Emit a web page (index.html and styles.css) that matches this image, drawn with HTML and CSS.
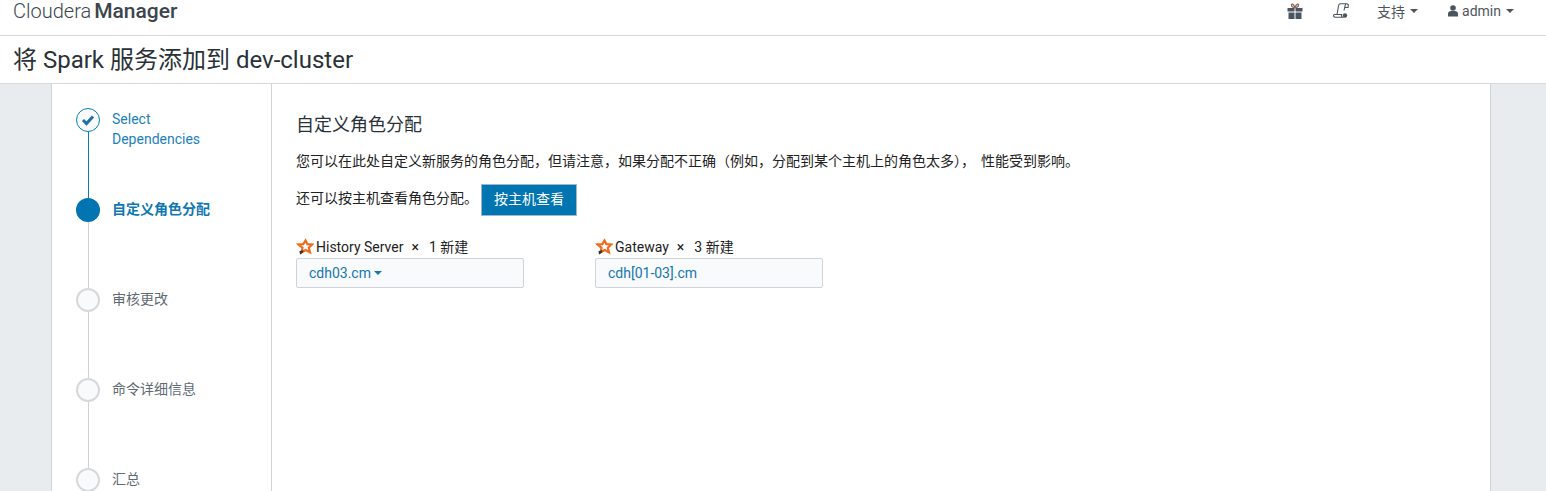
FILE: index.html
```html
<!DOCTYPE html>
<html lang="zh">
<head>
<meta charset="utf-8">
<title>将 Spark 服务添加到 dev-cluster</title>
<link rel="stylesheet" href="styles.css">
</head>
<body>
<header class="topbar">
  <div class="brand"><span class="brand-light">Cloudera</span> <b>Manager</b></div>
  <nav class="topnav">
    <svg class="icon gift" width="16" height="16" viewBox="0 0 16 16"><path fill="#4a5560" d="M.5 5h7v3.500h-7zM8.500 5h7v3.500h-7zM1.500 9.500h6V16h-6zM8.500 9.500h6V16h-6z"/><path fill="none" stroke="#8a6a5a" stroke-width="1.300" d="M8 4.500C6 4.500 4.500 3.500 4.500 2S6.500.5 8 4.500C9.500.5 11.500.5 11.500 2S10 4.500 8 4.500z"/></svg>
    <svg class="icon scroll" width="16" height="16" viewBox="0 0 16 16"><path fill="none" stroke="#4a5560" stroke-width="1.100" d="M4 11.500L5.600 2.500C5.800 1.300 6.600 .8 7.600 .8h6.200c1 0 1.700.8 1.500 1.800L15 4.500h-3M13.800.8c-1 0-1.500.7-1.700 1.800L11 7.500M4 11.500H1.500C.7 11.500.3 12.300.6 13c.3.800 1 1.300 1.800 1.300H9.500c-.9-.5-1.200-1.800-.8-2.800H4z"/><circle cx="12" cy="12.500" r="2.200" fill="#4a5560"/></svg>
    <span class="navitem support">支持<i class="caret"></i></span>
    <span class="navitem user">
      <svg width="10" height="12" viewBox="0 0 10 12"><circle cx="5" cy="3" r="2.800" fill="#4a5560"/><path fill="#4a5560" d="M0 11.500V8.500C0 7 1.500 6 3 6h4c1.500 0 3 1 3 2.500v3z"/></svg>
      admin<i class="caret"></i>
    </span>
  </nav>
</header>
<div class="titlebar"><h1>将 Spark 服务添加到 dev-cluster</h1></div>
<main class="shell">
  <div class="panel">
    <aside class="steps">
      <div class="step done">
        <span class="dot"><svg width="14" height="12" viewBox="0 0 14 12"><path fill="none" stroke="#1f6f9f" stroke-width="3" d="M2 6l3.500 3.500L12 2.500"/></svg></span>
        <span class="label">Select Dependencies</span>
      </div>
      <div class="step current"><span class="dot"></span><span class="label">自定义角色分配</span></div>
      <div class="step"><span class="dot"></span><span class="label">审核更改</span></div>
      <div class="step"><span class="dot"></span><span class="label">命令详细信息</span></div>
      <div class="step last"><span class="dot"></span><span class="label">汇总</span></div>
    </aside>
    <section class="content">
      <h2>自定义角色分配</h2>
      <p class="intro">您可以在此处自定义新服务的角色分配，但请注意，如果分配不正确（例如，分配到某个主机上的角色太多），<span class="gap">性能受到影响。</span></p>
      <div class="byhost"><span class="byhost-text">还可以按主机查看角色分配。</span><button class="btn" type="button">按主机查看</button></div>
      <div class="roles">
        <div class="role">
          <div class="role-head">
            <svg class="star" width="18" height="18" viewBox="0 0 18 18"><path fill="#fff" stroke="#f06a1c" stroke-width="2.200" d="M9.500 2.500l1.900 3.600 4.800.4-3.400 3.300 1.200 4.500-4.300-2.300-4 2.300.8-4.500L2.500 6.500l4.800-.4z"/><path fill="#333" d="M3.500 13l3.800-.8-.4 2.300-2.900 2z"/></svg>
            <span class="role-name">History Server</span><span class="times">×</span><span class="count">1 新建</span>
          </div>
          <div class="hostbox"><a class="host">cdh03.cm</a><i class="caret blue"></i></div>
        </div>
        <div class="role">
          <div class="role-head">
            <svg class="star" width="18" height="18" viewBox="0 0 18 18"><path fill="#fff" stroke="#f06a1c" stroke-width="2.200" d="M9.500 2.500l1.900 3.600 4.800.4-3.400 3.300 1.200 4.500-4.300-2.300-4 2.300.8-4.500L2.500 6.500l4.800-.4z"/><path fill="#333" d="M3.500 13l3.800-.8-.4 2.300-2.900 2z"/></svg>
            <span class="role-name">Gateway</span><span class="times">×</span><span class="count">3 新建</span>
          </div>
          <div class="hostbox"><a class="host">cdh[01-03].cm</a></div>
        </div>
      </div>
    </section>
  </div>
</main>
</body>
</html>
```
FILE: styles.css
```css
* { box-sizing: border-box; }
html, body { margin: 0; height: 491px; overflow: hidden; }
body {
  background: #fff;
  color: #2a3238;
  font-family: Roboto, "Noto Sans CJK SC", sans-serif;
  font-size: 14px;
  display: flex;
  flex-direction: column;
}
.topbar {
  height: 36px;
  flex: none;
  border-bottom: 1px solid #d9d9d9;
  display: flex;
  align-items: flex-start;
  justify-content: space-between;
  padding: 0 32px 0 13px;
}
.brand { font-size: 20px; line-height: 23px; color: #3c454c; word-spacing: -2px; }
.brand-light { font-weight: 300; }
.brand b { font-weight: 500; font-size: 21px; }
.topnav { display: flex; align-items: center; height: 22px; color: #4d565d; }
.icon { flex: none; }
.gift { margin-right: 30px; }
.scroll { margin-right: 28px; }
.navitem { display: flex; align-items: center; font-size: 14px; }
.support { margin-right: 30px; }
.user svg { margin-right: 4px; }
.caret {
  display: inline-block;
  width: 0;
  height: 0;
  margin-left: 5px;
  border-left: 4px solid transparent;
  border-right: 4px solid transparent;
  border-top: 4px solid #4d565d;
}
.caret.blue { border-top-color: #0f7ab5; margin-left: 3px; }
.titlebar {
  height: 48px;
  flex: none;
  border-bottom: 1px solid #d9d9d9;
  padding-left: 13px;
  display: flex;
  align-items: center;
}
h1 { margin: 0; font-size: 24px; font-weight: 400; line-height: 48px; color: #2a3238; }
.shell { flex: 1; background: #e9ecef; padding: 0 55px 0 51px; min-height: 0; }
.panel {
  height: 100%;
  background: #fff;
  border-left: 1px solid #ced4da;
  border-right: 1px solid #ced4da;
  display: flex;
}
.steps {
  width: 220px;
  flex: none;
  border-right: 1px solid #ced4da;
  padding: 24px 0 0 24px;
  overflow: hidden;
}
.step { height: 90px; display: flex; position: relative; color: #5f6a72; }
.step::after {
  content: "";
  position: absolute;
  left: 12px;
  top: 24px;
  bottom: 0;
  border-left: 1px solid #d2d2d2;
}
.step.done::after { border-left-color: #0f7ab5; }
.step.last::after { display: none; }
.dot {
  width: 24px;
  height: 24px;
  flex: none;
  border-radius: 50%;
  border: 2px solid #d6d8db;
  background: #f9fafc;
  display: flex;
  align-items: center;
  justify-content: center;
}
.done .dot { border: 1px solid #0f7ab5; background: #f9fafc; }
.current .dot { border-color: #0075b1; background: #0075b1; }
.label { margin-left: 12px; width: 100px; padding-top: 1px; line-height: 20px; font-size: 14px; }
.done .label { color: #1b80bb; }
.current .label { color: #0f78b0; font-weight: 700; }
.content { flex: 1; padding: 29px 24px 0; color: #222; }
h2 { margin: 0 0 15px; font-size: 18px; font-weight: 400; line-height: 24px; color: #2a3238; }
.intro { margin: 0; line-height: 18px; }
.gap { margin-left: 6px; }
.byhost { display: flex; align-items: center; margin-top: 14px; }
.byhost-text { width: 185px; padding-bottom: 6px; }
.btn {
  width: 96px;
  height: 32px;
  padding: 0 0 5px;
  background: #0075b1;
  border: 1px solid #9fb7c7;
  color: #fff;
  font: inherit;
  font-size: 14px;
}
.roles { display: flex; gap: 71px; margin-top: 21px; }
.role { width: 228px; }
.role-head { display: flex; align-items: center; height: 20px; margin-bottom: 1px; }
.star { flex: none; margin-right: 1px; }
.role-name { margin-left: 1px; }
.times { margin: 0 10px 0 8px; }
.count { padding-bottom: 2px; }
.hostbox {
  height: 30px;
  border: 1px solid #ced4da;
  background: #f9fafc;
  border-radius: 2px;
  padding: 0 12px;
  display: flex;
  align-items: center;
  color: #1477b0;
}
```
